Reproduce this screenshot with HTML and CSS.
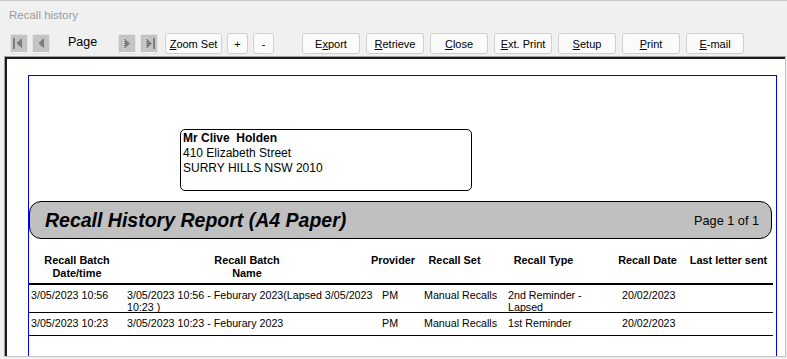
FILE: index.html
```html
<!DOCTYPE html>
<html lang="en">
<head>
  <meta charset="UTF-8" />
  <title>Recall history</title>
  <link rel="stylesheet" href="styles.css">
</head>
<body>

  <div class="window">
    <div class="titlebar">Recall history</div>

    <div class="toolbar">
      <button class="nav first">
        <svg width="16" height="17" viewBox="0 0 16 17"><rect width="16" height="17" fill="#c4c4c4"/><rect x="2" y="3" width="2" height="11" fill="#7d7d7d"/><polygon points="5,8.5 11,3 11,14" fill="#7d7d7d"/><polyline points="5,8.5 11,14" stroke="#fff" stroke-dasharray="1 1" fill="none"/></svg>
      </button>
      <button class="nav">
        <svg width="16" height="17" viewBox="0 0 16 17"><rect width="16" height="17" fill="#c4c4c4"/><polygon points="5,8.5 11,3 11,14" fill="#7d7d7d"/><polyline points="5,8.5 11,14" stroke="#fff" stroke-dasharray="1 1" fill="none"/></svg>
      </button>
      <span class="page-label">Page</span>
      <button class="nav">
        <svg width="16" height="17" viewBox="0 0 16 17"><rect width="16" height="17" fill="#c4c4c4"/><polygon points="11,8.5 5,3 5,14" fill="#7d7d7d"/><polyline points="5,3 5,14" stroke="#fff" stroke-dasharray="1 1" fill="none"/></svg>
      </button>
      <button class="nav">
        <svg width="16" height="17" viewBox="0 0 16 17"><rect width="16" height="17" fill="#c4c4c4"/><polygon points="11,8.5 5,3 5,14" fill="#7d7d7d"/><rect x="12" y="3" width="2" height="11" fill="#7d7d7d"/><polyline points="5,3 5,14" stroke="#fff" stroke-dasharray="1 1" fill="none"/></svg>
      </button>
      <button class="btn zoom"><u>Z</u>oom Set</button>
      <button class="btn small">+</button>
      <button class="btn small">-</button>
      <button class="btn wide export">E<u>x</u>port</button>
      <button class="btn wide"><u>R</u>etrieve</button>
      <button class="btn wide"><u>C</u>lose</button>
      <button class="btn wide"><u>E</u>xt. Print</button>
      <button class="btn wide"><u>S</u>etup</button>
      <button class="btn wide"><u>P</u>rint</button>
      <button class="btn wide"><u>E</u>-mail</button>
    </div>

    <div class="preview">
      <div class="page">

        <div class="address">
          <b>Mr Clive&nbsp; Holden</b><br>
          410 Elizabeth Street<br>
          SURRY HILLS NSW 2010
        </div>

        <div class="report-title">
          <span class="title-text">Recall History Report (A4 Paper)</span>
          <span class="page-no">Page 1 of 1</span>
        </div>

        <div class="col-heads">
          <div>Recall Batch<br>Date/time</div>
          <div>Recall Batch<br>Name</div>
          <div>Provider</div>
          <div>Recall Set</div>
          <div>Recall Type</div>
          <div>Recall Date</div>
          <div>Last letter sent</div>
        </div>

        <div class="row tall">
          <div>3/05/2023 10:56</div>
          <div>3/05/2023 10:56 - Feburary 2023(Lapsed 3/05/2023 10:23 )</div>
          <div>PM</div>
          <div>Manual Recalls</div>
          <div>2nd Reminder - Lapsed</div>
          <div class="date">20/02/2023</div>
          <div></div>
        </div>
        <div class="row">
          <div>3/05/2023 10:23</div>
          <div>3/05/2023 10:23 - Feburary 2023</div>
          <div>PM</div>
          <div>Manual Recalls</div>
          <div>1st Reminder</div>
          <div class="date">20/02/2023</div>
          <div></div>
        </div>

      </div>
    </div>
  </div>

</body>
</html>
```

FILE: styles.css
```css
body {
  margin: 0;
  background: #f0f0f0;
  font-family: "Liberation Sans", Arial, sans-serif;
}

.window {
  width: 787px;
  height: 359px;
  box-sizing: border-box;
  border-top: 1px solid #c8c8c8;
  background: #f0f0f0;
  overflow: hidden;
}

.titlebar {
  height: 29px;
  line-height: 29px;
  padding-left: 9px;
  font-size: 11.5px;
  color: #9a9a9a;
}

/* toolbar */
.toolbar {
  display: flex;
  align-items: center;
  height: 21px;
  margin-top: 3px;
  padding-left: 10px;
}

.toolbar > * {
  flex-shrink: 0;
}

.nav {
  width: 18px;
  height: 20px;
  margin-right: 4px;
  padding: 0;
  display: flex;
  align-items: center;
  justify-content: center;
  border: 1px solid #e4e4e4;
  border-radius: 2px;
  background: #f6f6f6;
}

.nav svg {
  display: block;
}

.page-label {
  margin: 0 21px 0 14px;
  width: 29px;
  font-size: 12.5px;
  position: relative;
  top: -2px;
}

.btn {
  height: 21px;
  padding: 0;
  font-family: "Liberation Sans", Arial, sans-serif;
  font-size: 11px;
  color: #000;
  background: #fbfbfb;
  border: 1px solid #d0d0d0;
  border-radius: 3px;
}

.btn.zoom {
  width: 57px;
  margin-left: 3px;
}

.btn.small {
  width: 21px;
  margin-left: 5px;
}

.btn.wide {
  width: 58px;
  margin-left: 6px;
}

.btn.export {
  margin-left: 28px;
}

/* report preview */
.preview {
  height: 301px;
  margin: 2px 1px 0 4px;
  padding: 18px 0 0 23px;
  box-sizing: border-box;
  background: #fff;
  border-top: 1px solid #a0a0a0;
  border-left: 1px solid #a0a0a0;
  border-right: 1px solid #c4c4c4;
  border-bottom: 1px solid #c4c4c4;
  box-shadow: inset 2px 2px 0 #1a1a1a;
  overflow: hidden;
}

.page {
  width: 749px;
  height: 400px;
  box-sizing: border-box;
  border: 1px solid #0000ff;
  color: #000;
}

.address {
  width: 292px;
  height: 62px;
  box-sizing: border-box;
  margin: 53px 0 0 151px;
  padding: 1px 0 0 2px;
  border: 1px solid #000;
  border-radius: 5px;
  font-size: 12px;
  line-height: 15px;
}

.report-title {
  width: 743px;
  height: 38px;
  box-sizing: border-box;
  margin-top: 10px;
  padding: 0 12px 0 15px;
  display: flex;
  align-items: center;
  justify-content: space-between;
  background: #c0c0c0;
  border: 1px solid #000;
  border-radius: 12px;
}

.title-text {
  font-size: 19.5px;
  font-weight: bold;
  font-style: italic;
}

.page-no {
  font-size: 12.7px;
  padding-top: 1px;
}

.col-heads {
  display: grid;
  grid-template-columns: 96px 244px 48px 75px 103px 105px 57px;
  width: 744px;
  margin-top: 15px;
  padding-bottom: 3px;
  border-bottom: 2px solid #000;
  font-size: 10.9px;
  font-weight: bold;
  line-height: 13px;
}

.col-heads div {
  display: flex;
  justify-content: center;
  text-align: center;
  white-space: nowrap;
}

.row {
  display: grid;
  grid-template-columns: 96px 255px 42px 84px 84px 96px 1fr;
  width: 744px;
  height: 23px;
  box-sizing: border-box;
  padding-top: 4px;
  border-bottom: 1px solid #000;
  font-size: 10.7px;
  line-height: 12px;
  overflow: hidden;
}

.row.tall {
  height: 28px;
}

.row div {
  padding-left: 2px;
}

.row .date {
  padding-left: 32px;
}
```
